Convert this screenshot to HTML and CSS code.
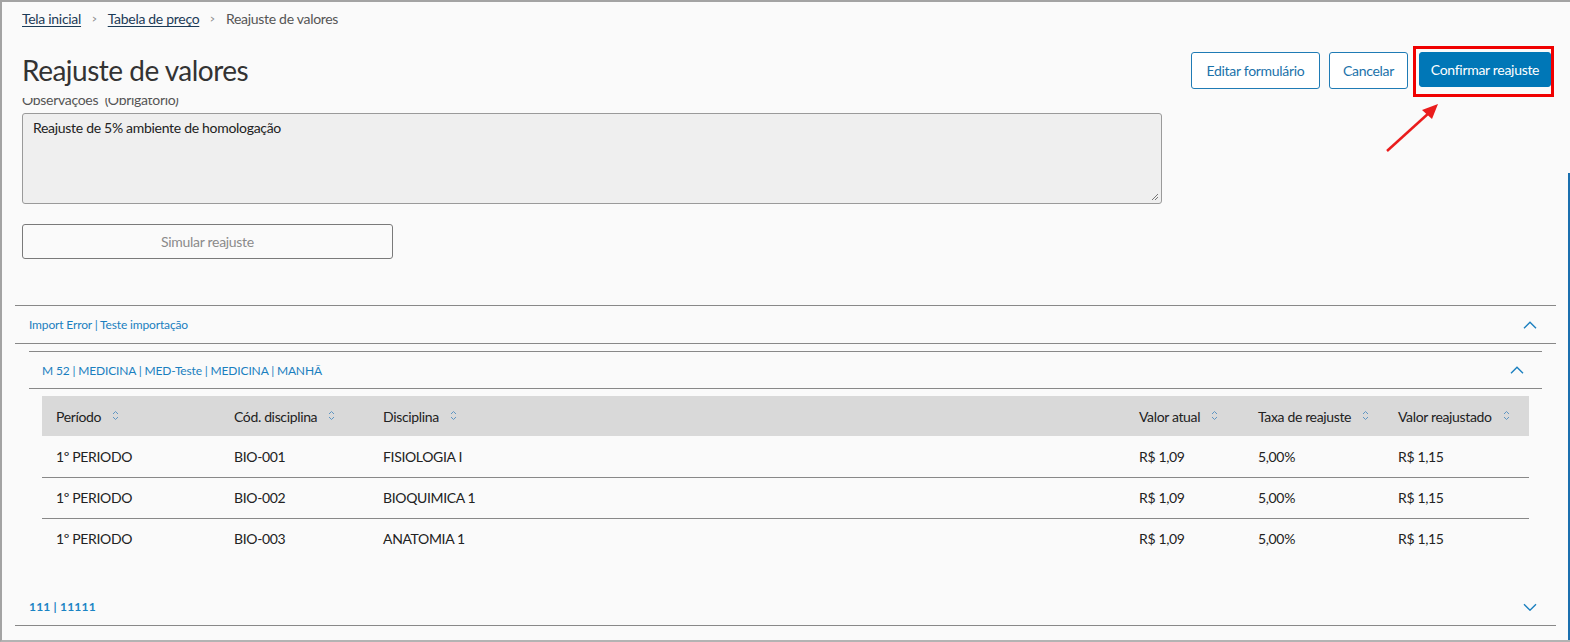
FILE: index.html
```html
<!DOCTYPE html>
<html lang="pt-BR">
<head>
<meta charset="utf-8">
<title>Reajuste de valores</title>
<link rel="stylesheet" href="styles.css">
</head>
<body>
<div class="frame">
  <nav class="breadcrumb">
    <a href="#" class="crumb-link">Tela inicial</a>
    <span class="crumb-sep">&gt;</span>
    <a href="#" class="crumb-link">Tabela de preço</a>
    <span class="crumb-sep">&gt;</span>
    <span class="crumb-current">Reajuste de valores</span>
  </nav>

  <header class="page-header">
    <h1 class="page-title">Reajuste de valores</h1>
    <div class="actions">
      <button class="btn btn-outline btn-edit">Editar formulário</button>
      <button class="btn btn-outline btn-cancel">Cancelar</button>
      <button class="btn btn-primary">Confirmar reajuste</button>
    </div>
  </header>

  <div class="form">
    <label class="field-label">Observações&nbsp; (Obrigatório)</label>
    <div class="textarea">Reajuste de 5% ambiente de homologação
      <svg class="resize" width="8" height="8" viewBox="0 0 8 8"><path d="M7 1 L1 7 M7 4 L4 7" stroke="#777" stroke-width="1" fill="none"/></svg>
    </div>
    <button class="btn-simulate">Simular reajuste</button>
  </div>

  <section class="accordion outer">
    <div class="acc-item">
      <div class="acc-head">
        <span class="acc-title">Import Error | Teste importação</span>
        <svg class="chev" width="14" height="8" viewBox="0 0 14 8"><path d="M1 7.2 L7 1.2 L13 7.2" stroke="#1a7fbf" stroke-width="1.4" fill="none"/></svg>
      </div>
      <div class="acc-body">
        <div class="accordion inner">
          <div class="acc-item">
            <div class="acc-head">
              <span class="acc-title">M 52 | MEDICINA | MED-Teste | MEDICINA | MANHÃ</span>
              <svg class="chev" width="14" height="8" viewBox="0 0 14 8"><path d="M1 7.2 L7 1.2 L13 7.2" stroke="#1a7fbf" stroke-width="1.4" fill="none"/></svg>
            </div>
            <div class="acc-body inner-body">
              <table class="grid">
                <thead>
                  <tr>
                    <th class="c1">Período <span class="sort"><svg width="7" height="11" viewBox="0 0 7 11"><path d="M1 4 L3.5 1.5 L6 4 M1 7 L3.5 9.5 L6 7" stroke="#5f95c2" stroke-width="1" fill="none"/></svg></span></th>
                    <th class="c2">Cód. disciplina <span class="sort"><svg width="7" height="11" viewBox="0 0 7 11"><path d="M1 4 L3.5 1.5 L6 4 M1 7 L3.5 9.5 L6 7" stroke="#5f95c2" stroke-width="1" fill="none"/></svg></span></th>
                    <th class="c3">Disciplina <span class="sort"><svg width="7" height="11" viewBox="0 0 7 11"><path d="M1 4 L3.5 1.5 L6 4 M1 7 L3.5 9.5 L6 7" stroke="#5f95c2" stroke-width="1" fill="none"/></svg></span></th>
                    <th class="c4">Valor atual <span class="sort"><svg width="7" height="11" viewBox="0 0 7 11"><path d="M1 4 L3.5 1.5 L6 4 M1 7 L3.5 9.5 L6 7" stroke="#5f95c2" stroke-width="1" fill="none"/></svg></span></th>
                    <th class="c5">Taxa de reajuste <span class="sort"><svg width="7" height="11" viewBox="0 0 7 11"><path d="M1 4 L3.5 1.5 L6 4 M1 7 L3.5 9.5 L6 7" stroke="#5f95c2" stroke-width="1" fill="none"/></svg></span></th>
                    <th class="c6">Valor reajustado <span class="sort"><svg width="7" height="11" viewBox="0 0 7 11"><path d="M1 4 L3.5 1.5 L6 4 M1 7 L3.5 9.5 L6 7" stroke="#5f95c2" stroke-width="1" fill="none"/></svg></span></th>
                  </tr>
                </thead>
                <tbody>
                  <tr><td>1º PERIODO</td><td>BIO-001</td><td>FISIOLOGIA I</td><td>R$ 1,09</td><td>5,00%</td><td>R$ 1,15</td></tr>
                  <tr><td>1º PERIODO</td><td>BIO-002</td><td>BIOQUIMICA 1</td><td>R$ 1,09</td><td>5,00%</td><td>R$ 1,15</td></tr>
                  <tr><td>1º PERIODO</td><td>BIO-003</td><td>ANATOMIA 1</td><td>R$ 1,09</td><td>5,00%</td><td>R$ 1,15</td></tr>
                </tbody>
              </table>
            </div>
          </div>
        </div>
      </div>
    </div>
    <div class="acc-item">
      <div class="acc-head">
        <span class="acc-title strong">111 | 11111</span>
        <svg class="chev" width="14" height="8" viewBox="0 0 14 8"><path d="M1 1.2 L7 7.2 L13 1.2" stroke="#1a7fbf" stroke-width="1.4" fill="none"/></svg>
      </div>
    </div>
  </section>

  <svg class="annotation" width="1570" height="642" viewBox="0 0 1570 642">
    <rect x="1414.5" y="47.5" width="138" height="48" fill="none" stroke="#f00000" stroke-width="3"/>
    <line x1="1387" y1="151" x2="1430" y2="112" stroke="#ea1c1c" stroke-width="2.5"/>
    <path d="M1438 104 L1422 110 L1432 119 Z" fill="#ea1c1c"/>
  </svg>
  <div class="edge-right"></div>
</div>
</body>
</html>
```

FILE: styles.css
```css
* { box-sizing: border-box; }
html, body { margin: 0; padding: 0; }
body {
  background: #fafafa;
  font-family: Lato, "Open Sans", Arial, sans-serif;
  color: #222;
  width: 1570px;
  height: 642px;
  overflow: hidden;
}
.frame {
  position: relative;
  width: 1570px;
  height: 642px;
  border-left: 2px solid #a3a3a3;
  border-top: 2px solid #a3a3a3;
  border-bottom: 2px solid #b3b3b3;
  background: #fafafa;
  padding-left: 20px;
}
.breadcrumb {
  display: flex;
  align-items: center;
  height: 20px;
  margin-top: 7px;
  font-size: 14px;
  line-height: 20px;
  letter-spacing: -0.3px;
}
.crumb-link {
  color: #1c3b57;
  text-decoration: underline;
  text-underline-offset: 2px;
}
.crumb-sep {
  color: #888;
  font-size: 12px;
  margin: 0 10px 0 10px;
  transform: scaleX(0.7);
}
.crumb-current { color: #555; }

.page-header {
  position: relative;
  z-index: 2;
  background: #fafafa;
  display: flex;
  justify-content: space-between;
  align-items: flex-start;
  padding-top: 23px;
  padding-right: 19px;
  height: 69px;
}
.page-title {
  margin: 0;
  font-size: 28px;
  line-height: 36px;
  font-weight: 400;
  color: #333;
  letter-spacing: -0.5px;
}
.actions {
  display: flex;
  align-items: flex-start;
}
.btn {
  font-family: Lato, Arial, sans-serif;
  font-size: 14px;
  letter-spacing: -0.3px;
  height: 37px;
  border-radius: 3px;
  padding: 0;
  cursor: pointer;
}
.btn-outline {
  background: #fff;
  border: 1px solid #1f7bb5;
  color: #1a72aa;
}
.btn-edit { width: 129px; }
.btn-cancel { width: 79px; margin-left: 9px; }
.btn-primary {
  width: 132px;
  margin-left: 11px;
  background: #0077b7;
  border: 1px solid #0077b7;
  color: #fff;
  height: 35px;
}

.form {
  display: flex;
  flex-direction: column;
  align-items: flex-start;
}
.field-label {
  position: relative;
  z-index: 1;
  margin-top: -7px;
  font-size: 14px;
  line-height: 17px;
  letter-spacing: -0.3px;
  color: #555;
}
.textarea {
  position: relative;
  margin-top: 5px;
  width: 1140px;
  height: 91px;
  background: #efefef;
  border: 1px solid #9a9a9a;
  border-radius: 3px;
  padding: 5px 10px;
  font-size: 14px;
  line-height: 17px;
  letter-spacing: -0.3px;
  color: #222;
}
.resize {
  position: absolute;
  right: 2px;
  bottom: 2px;
}
.btn-simulate {
  margin-top: 20px;
  width: 371px;
  height: 35px;
  background: #fafafa;
  border: 1px solid #7a7a7a;
  border-radius: 3px;
  font-family: Lato, Arial, sans-serif;
  font-size: 14px;
  letter-spacing: -0.3px;
  color: #8a8a8a;
}

.accordion.outer {
  margin-top: 46px;
  margin-left: -7px;
  width: 1541px;
  border-top: 1px solid #888;
}
.acc-head {
  display: flex;
  justify-content: space-between;
  align-items: center;
  height: 38px;
  border-bottom: 1px solid #888;
  padding: 0 19px 0 14px;
}
.acc-title {
  font-size: 12px;
  letter-spacing: -0.15px;
  color: #1a7fbf;
}
.acc-title.strong { font-weight: 700; letter-spacing: 0.2px; color: #1b84c4; }
.outer > .acc-item > .acc-body {
  padding: 7px 14px 7px 14px;
}
.accordion.inner {
  border-top: 1px solid #888;
}
.inner .acc-head {
  height: 37px;
  padding: 0 18px 0 13px;
}
.inner-body {
  padding: 7px 13px 23px 13px;
}
.grid {
  width: 1487px;
  border-collapse: collapse;
  table-layout: fixed;
  font-size: 14px;
  letter-spacing: -0.35px;
}
.grid th {
  background: #d9d9d9;
  height: 40px;
  font-weight: 400;
  text-align: left;
  padding: 0 0 0 14px;
  color: #222;
  white-space: nowrap;
}
.grid td {
  height: 41px;
  padding: 0 0 0 14px;
  border-bottom: 1px solid #888;
  color: #222;
  white-space: nowrap;
}
.grid tbody tr:last-child td { border-bottom: none; height: 40px; }
.c1 { width: 178px; }
.c2 { width: 149px; }
.c3 { width: 756px; }
.c4 { width: 119px; }
.c5 { width: 140px; }
.c6 { width: 145px; }
.sort {
  display: inline-block;
  vertical-align: middle;
  margin-left: 8px;
  line-height: 0;
  position: relative;
  top: -2px;
}

.annotation {
  position: absolute;
  left: -2px;
  top: -2px;
  pointer-events: none;
  z-index: 5;
}
.edge-right {
  position: absolute;
  right: 0;
  top: 171px;
  bottom: 0;
  width: 2px;
  background: #1a6fae;
  z-index: 5;
}
```
